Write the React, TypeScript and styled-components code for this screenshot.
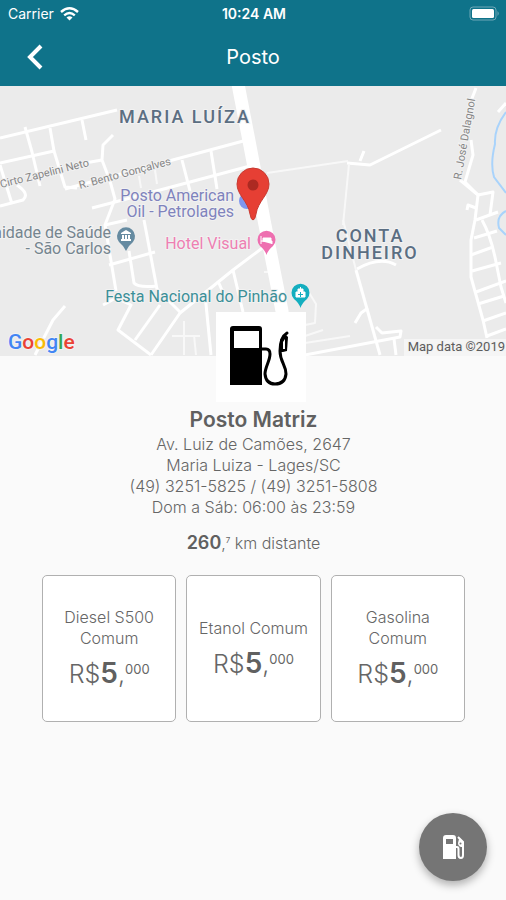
import React from "react";
import styled, { createGlobalStyle } from "styled-components";

const GlobalStyle = createGlobalStyle`
  *, *::before, *::after { box-sizing: border-box; }
  body {
    margin: 0;
    background: #fafafa;
    color: #666;
    font-family: Inter, Roboto, "Liberation Sans", sans-serif;
  }
`;

const Page = styled.div`
  min-height: 100vh;
  display: flex;
  flex-direction: column;
`;

const Header = styled.header`
  background: #0f738a;
  color: #fff;
`;

const StatusBar = styled.div`
  display: grid;
  grid-template-columns: 1fr auto 1fr;
  align-items: center;
  height: 27px;
  padding: 0 6px 0 8px;
  font-size: 14px;
`;

const Carrier = styled.span`
  display: flex;
  align-items: center;
  gap: 6px;
`;

const Clock = styled.time`
  font-weight: 600;
`;

const BatterySlot = styled.span`
  display: flex;
  justify-content: flex-end;
`;

const NavBar = styled.div`
  display: grid;
  grid-template-columns: 70px 1fr 70px;
  align-items: center;
  height: 59px;
`;

const BackButton = styled.button`
  display: flex;
  justify-content: center;
  padding: 10px;
  border: 0;
  background: none;
  color: inherit;
  cursor: pointer;
`;

const NavTitle = styled.h1`
  margin: 0;
  font-size: 20px;
  font-weight: 400;
  line-height: 28px;
  text-align: center;
`;

const MapSvg = styled.svg`
  display: block;
  width: 100%;
  height: 270px;
  background: #ebebeb;
`;

const PlaceText = styled.text<{ $tone: string; $size?: number }>`
  fill: ${(p) => p.$tone};
  font-family: Roboto, "Liberation Sans", sans-serif;
  font-size: ${(p) => p.$size ?? 16}px;
  stroke: #f2f2f2;
  stroke-width: 2px;
  paint-order: stroke;
`;

const DistrictText = styled(PlaceText)`
  font-weight: 500;
  letter-spacing: 2px;
`;

const Wordmark = styled(PlaceText)`
  font-weight: 500;
`;

const Station = styled.main`
  display: flex;
  flex-direction: column;
  align-items: center;
  padding: 0 41px 100px 42px;
`;

const Logo = styled.div`
  position: relative;
  width: 90px;
  height: 90px;
  margin-top: -44px;
  margin-left: 14px;
  background: #fff;
`;

const StationName = styled.h2`
  margin: 4px 0 0;
  font-size: 21px;
  font-weight: 600;
  line-height: 28px;
  color: #606060;
`;

const Details = styled.address`
  font-size: 16px;
  font-style: normal;
  font-weight: 300;
  line-height: 21px;
  text-align: center;
`;

const Distance = styled.p`
  margin: 14px 0 0;
  font-size: 16px;
  font-weight: 300;
  line-height: 22px;
`;

const DistanceValue = styled.strong`
  font-size: 18px;
  font-weight: 600;
  color: #606060;
`;

const Fraction = styled.span<{ $size: number; $rise: number }>`
  font-size: ${(p) => p.$size}px;
  font-weight: 400;
  line-height: 1;
  vertical-align: ${(p) => p.$rise}px;
`;

const Prices = styled.ul`
  display: grid;
  grid-template-columns: repeat(3, 1fr);
  gap: 10px;
  width: 100%;
  margin: 21px 0 0;
  padding: 0;
  list-style: none;
`;

const PriceCard = styled.li`
  display: flex;
  flex-direction: column;
  align-items: center;
  justify-content: center;
  gap: 8px;
  min-height: 147px;
  padding: 8px;
  border: 1px solid #b0b0b0;
  border-radius: 5px;
  background: #fff;
  text-align: center;
`;

const FuelName = styled.span`
  font-size: 16px;
  font-weight: 300;
  line-height: 21px;
`;

const Price = styled.span`
  font-size: 25px;
  font-weight: 300;
  line-height: 32px;
  white-space: nowrap;
`;

const Whole = styled.strong`
  font-size: 28px;
  font-weight: 600;
  color: #606060;
`;

const Fab = styled.button`
  position: fixed;
  right: 19px;
  bottom: 19px;
  display: flex;
  align-items: center;
  justify-content: center;
  width: 68px;
  height: 68px;
  padding: 0;
  border: 0;
  border-radius: 50%;
  background: #757575;
  color: #fff;
  box-shadow: 0 4px 8px rgba(0, 0, 0, 0.3);
  cursor: pointer;
`;

const WifiIcon = () => (
  <svg width="19" height="14" viewBox="0 0 19 14" fill="none" stroke="#fff" strokeWidth="2.4" aria-hidden="true">
    <path d="M1 5Q9.500-2.500 18 5" />
    <path d="M4.200 8.300Q9.500 3.700 14.800 8.300" />
    <path d="M9.500 13.500L6.500 10.500Q9.500 8 12.500 10.500Z" fill="#fff" stroke="none" />
  </svg>
);

const BatteryIcon = () => (
  <svg width="31" height="15" viewBox="0 0 31 15" aria-hidden="true">
    <rect x="1" y="1" width="26" height="13" rx="3" fill="none" stroke="#6fa8b7" />
    <rect x="3" y="3" width="22" height="9" rx="1.500" fill="#fff" />
    <path d="M28.500 5Q31 7.500 28.500 10Z" fill="#6fa8b7" />
  </svg>
);

const LogoIcon = () => (
  <svg width="90" height="90" viewBox="0 0 90 90" role="img" aria-label="Bomba de combustível">
    <path
      fillRule="evenodd"
      d="M14 73V17Q14 14 17 14H43Q46 14 46 17V73ZM18 19V36H43V19Z"
    />
    <path
      d="M46 37H50Q54 37 54 42C54 49 49 55 49 62Q50 72 59 72Q69 72 70 62C70 53 64 50 64 39C64 30 66 24 71 21"
      fill="none"
      stroke="#000"
      strokeWidth="3"
      strokeLinecap="round"
    />
    <path d="M64 28L69 22L72 25L71 39L67 40H64Z" />
    <path d="M67 30L69 27V37H67Z" fill="#fff" />
  </svg>
);

const PumpIcon = () => (
  <svg width="24" height="26" viewBox="0 0 24 26" aria-hidden="true">
    <path
      fill="currentColor"
      fillRule="evenodd"
      d="M2 25V4Q2 1 5 1H12Q15 1 15 4V25ZM5 5V10H12V5Z"
    />
    <path
      d="M15 13H16Q17.500 13 17.500 15V21Q17.500 24 20 24Q22 24 22 21V8L17 3"
      fill="none"
      stroke="currentColor"
      strokeWidth="2"
    />
    <path d="M18 5L22 8V13H20Q17 12 17 9Z" fill="currentColor" />
    <circle cx="19.500" cy="9.500" r="1" fill="#757575" />
  </svg>
);

const thinRoads = [
  "M267 87L348 75", "M343 139L349 78", "M264 186H271", "M305 250L323 244",
  "M305 257L350 250", "M305 239L315 237L316 218L308 205", "M194 249L196 269",
  "M184 235V269", "M172 250H200", "M343 134L356 184", "M139 90L141 102", "M155 84L157 98",
];

const roads = [
  "M0 52L117 24", "M25 41L32 66L40 100", "M50 42L54 65L65 101L77 102",
  "M0 77L54 65", "M82 34L86 54", "M113 49L103 59L102 74L110 95L115 113L105 139L116 205",
  "M85 77L102 74", "M65 103L247 54", "M92 122L115 116L250 80",
  "M182 74L190 105", "M211 65L217 103", "M0 120L23 114Q30 108 17 99", "M0 79L12 118",
  "M347 77L370 79L441 44", "M360 75L364 65", "M476 2L471 15",
  "M471 54L473 69L465 96L478 109L475 134L471 154V191L483 234L487 252",
  "M460 94L478 109L493 106L490 129", "M467 124L468 119L476 122", "M476 134L498 126",
  "M498 26L506 17", "M482 134Q491 150 496 176L501 201L506 217",
  "M474 152L497 145", "M471 169L493 161", "M472 185L501 177", "M476 206L506 195",
  "M478 218L504 210", "M483 235L506 227", "M487 250L506 243",
  "M356 184L380 269", "M357 183Q380 170 396 179", "M368 222L361 227L355 237",
  "M376 241L382 247L401 245L400 251L305 269", "M394 253L396 269",
  "M151 269L180 227L233 184L265 160", "M109 179L155 166", "M105 139L127 134",
  "M144 134L157 203L180 226", "M129 165L134 197Q138 202 157 200",
  "M103 219L116 212L131 219L118 244L151 269", "M160 219L135 254",
  "M233 184L243 226", "M218 195L224 209", "M205 208L211 269", "M65 220L53 234L35 269",
];

const RouteMap = () => (
  <MapSvg viewBox="0 0 506 270" preserveAspectRatio="xMidYMid slice" role="img" aria-label="Mapa do posto">
    <g fill="none" stroke="#fff" strokeWidth="3" strokeLinejoin="round">
      {roads.map((d) => <path key={d} d={d} />)}
      <g stroke="#f8f8f8" strokeWidth="2">
        {thinRoads.map((d) => <path key={d} d={d} />)}
      </g>
    </g>
    <path d="M238-2L250 60L265 139L282 225L286 270" fill="none" stroke="#fff" strokeWidth="13" />
    <g fill="none" stroke="#a9d3fb" strokeWidth="2">
      <path d="M506 26Q494 42 495 58Q490 78 494 91L506 107" />
      <path d="M506 125Q496 130 499 142L506 149" />
    </g>
    <circle cx="247" cy="115" r="8" fill="#7f96ee" />
    <DistrictText $tone="#5b6e82" $size={18} x="119" y="37">MARIA LUÍZA</DistrictText>
    <DistrictText $tone="#5b6e82" $size={18} x="370" y="156" textAnchor="middle">CONTA</DistrictText>
    <DistrictText $tone="#5b6e82" $size={18} x="370" y="173" textAnchor="middle">DINHEIRO</DistrictText>
    <PlaceText $tone="#858585" $size={11} x="1" y="102" transform="rotate(-14 1 102)">Cirto Zapelini Neto</PlaceText>
    <PlaceText $tone="#858585" $size={11} x="80" y="103" transform="rotate(-15 80 103)">R. Bento Gonçalves</PlaceText>
    <PlaceText $tone="#858585" $size={11} x="461" y="94" transform="rotate(-80 461 94)">R. José Dalagnol</PlaceText>
    <PlaceText $tone="#7f83bd" x="234" y="115" textAnchor="end">Posto American</PlaceText>
    <PlaceText $tone="#7f83bd" x="234" y="131" textAnchor="end">Oil - Petrolages</PlaceText>
    <PlaceText $tone="#75858f" x="111" y="152" textAnchor="end">nidade de Saúde</PlaceText>
    <PlaceText $tone="#75858f" x="111" y="168" textAnchor="end">- São Carlos</PlaceText>
    <PlaceText $tone="#ee7fb2" x="251" y="163" textAnchor="end">Hotel Visual</PlaceText>
    <PlaceText $tone="#3b8f98" x="287" y="216" textAnchor="end">Festa Nacional do Pinhão</PlaceText>

    <path d="M126 165Q124 160 119 156A9 9 0 1 1 133 156Q128 160 126 165Z" fill="#668ba1" />
    <path d="M121 147L126 144L131 147V148H121ZM122 149H124V153H122ZM125 149H127V153H125ZM128 149H130V153H128ZM121 153H131V155H121Z" fill="#fff" />
    <path d="M266.500 169Q265 164 260 160A9 9 0 1 1 273 160Q268 164 266.500 169Z" fill="#ee6fb0" />
    <path d="M261 150V158M261 155H272V158M263 152H271V155H263Z" fill="#fff" stroke="#fff" />
    <path d="M300.500 222Q299 217 294 213A9 9 0 1 1 307 213Q302 217 300.500 222Z" fill="#14aebf" />
    <path d="M296 206H305V211H296ZM298 206V203H303V206M300.500 201V204" fill="#fff" stroke="#fff" />
    <path d="M300.500 206V211M298 208.500H303" stroke="#14aebf" />

    <path d="M253 134Q251 134 250 128C248 115 237 109 237 98A16 16 0 0 1 269 98C269 109 258 115 256 128Q255 134 253 134Z" fill="#e63f34" stroke="#c83a31" />
    <circle cx="253" cy="99" r="5.500" fill="#ac2a22" />

    <Wordmark $tone="#4285f4" $size={21} x="8" y="263">
      <tspan>G</tspan><tspan fill="#ea4335">o</tspan><tspan fill="#fbbc05">o</tspan><tspan>g</tspan><tspan fill="#34a853">l</tspan><tspan fill="#ea4335">e</tspan>
    </Wordmark>
    <rect x="404" y="253" width="102" height="17" fill="#f5f5f5" />
    <PlaceText $tone="#5c5c5c" $size={13} x="505" y="265" textAnchor="end">Map data ©2019</PlaceText>
  </MapSvg>
);

const fuels = [
  { name: "Diesel S500 Comum", whole: "5", cents: "000" },
  { name: "Etanol Comum", whole: "5", cents: "000" },
  { name: "Gasolina Comum", whole: "5", cents: "000" },
];

export default function App() {
  return (
    <Page>
      <GlobalStyle />
      <Header>
        <StatusBar>
          <Carrier>Carrier <WifiIcon /></Carrier>
          <Clock>10:24 AM</Clock>
          <BatterySlot><BatteryIcon /></BatterySlot>
        </StatusBar>
        <NavBar>
          <BackButton type="button" aria-label="Voltar">
            <svg width="18" height="26" viewBox="0 0 18 26" fill="none" stroke="currentColor" strokeWidth="4" aria-hidden="true">
              <path d="M15 2L4 13L15 24" />
            </svg>
          </BackButton>
          <NavTitle>Posto</NavTitle>
        </NavBar>
      </Header>
      <RouteMap />
      <Station>
        <Logo><LogoIcon /></Logo>
        <StationName>Posto Matriz</StationName>
        <Details>
          Av. Luiz de Camões, 2647<br />
          Maria Luiza - Lages/SC<br />
          (49) 3251-5825 / (49) 3251-5808<br />
          Dom a Sáb: 06:00 às 23:59
        </Details>
        <Distance>
          <DistanceValue>260</DistanceValue>,<Fraction $size={8} $rise={6}>7</Fraction> km distante
        </Distance>
        <Prices>
          {fuels.map((fuel) => (
            <PriceCard key={fuel.name}>
              <FuelName>{fuel.name}</FuelName>
              <Price>
                R$<Whole>{fuel.whole}</Whole>,
                <Fraction $size={13} $rise={9}>{fuel.cents}</Fraction>
              </Price>
            </PriceCard>
          ))}
        </Prices>
      </Station>
      <Fab type="button" aria-label="Abastecer"><PumpIcon /></Fab>
    </Page>
  );
}
